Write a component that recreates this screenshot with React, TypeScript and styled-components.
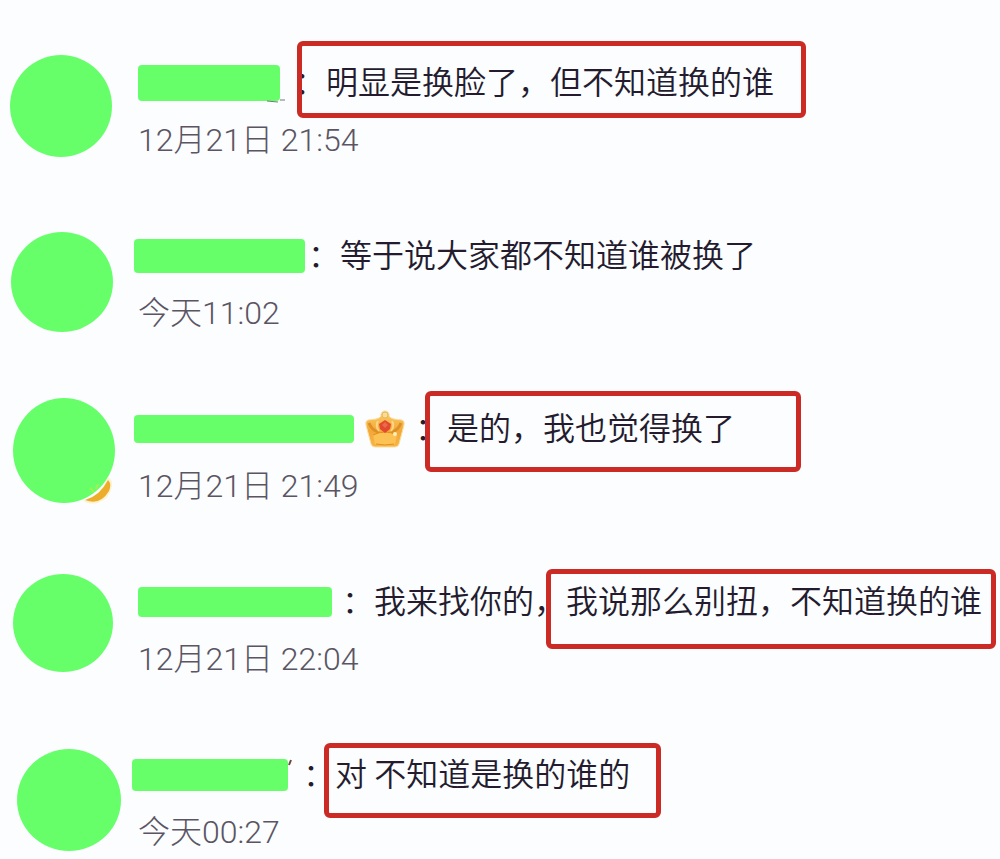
import React from "react";
import styled, { createGlobalStyle } from "styled-components";

const GlobalStyle = createGlobalStyle`
  *, *::before, *::after { box-sizing: border-box; }
  body {
    margin: 0;
    background: #fbfdff;
    color: #241c2e;
    font-family: "Noto Sans CJK SC", "Liberation Sans", sans-serif;
    font-size: 32px;
    font-weight: 350;
  }
`;

const GREEN = "#66ff6a";

const Thread = styled.ul`
  list-style: none;
  margin: 0;
  padding: 40px 0 0;
  display: flex;
  flex-direction: column;
  gap: 53px;
  overflow: hidden;
`;

const Comment = styled.li`
  display: grid;
  grid-template-columns: 132px minmax(0, 1fr);
  height: 120px;
`;

const AvatarCell = styled.div<{ $left: number; $top: number }>`
  padding: ${(p) => p.$top}px 0 0 ${(p) => p.$left}px;
`;

const Avatar = styled.div<{ $width: number; $height: number }>`
  position: relative;
  width: ${(p) => p.$width}px;
  height: ${(p) => p.$height}px;
  border-radius: 50%;
  background: ${GREEN};
`;

const AvatarBadge = styled.svg`
  position: absolute;
  right: 0;
  bottom: -2px;
`;

const Body = styled.div`
  min-width: 0;
`;

const Head = styled.div`
  display: flex;
  align-items: center;
  height: 80px;
  line-height: 80px;
  white-space: nowrap;
`;

const Author = styled.div<{ $width: number; $inset: number }>`
  position: relative;
  flex: none;
  display: flex;
  align-items: center;
  gap: 11px;
  width: ${(p) => p.$width}px;
  height: 40px;
  margin-top: 5px;
  padding-left: ${(p) => p.$inset}px;
`;

const NameBar = styled.span<{ $width: number; $height: number }>`
  width: ${(p) => p.$width}px;
  height: ${(p) => p.$height}px;
  border-radius: 4px;
  background: ${GREEN};
`;

const Remnant = styled.svg`
  position: absolute;
  right: 8px;
  top: 0;
`;

const Message = styled.p`
  margin: 0;
`;

const Highlight = styled.mark<{ $pad: [number, number, number, number] }>`
  padding: ${(p) => p.$pad.map((v) => `${v}px`).join(" ")};
  margin-left: ${(p) => -(p.$pad[3] + 5)}px;
  border: 5px solid #cb2b24;
  border-radius: 6px;
  background: transparent;
  color: inherit;
`;

const Time = styled.time`
  display: block;
  padding-left: 6px;
  line-height: 40px;
  color: #5b5563;
  font-family: Roboto, "Noto Sans CJK SC", sans-serif;
  font-weight: 300;
`;

function Crown() {
  return (
    <svg width="40" height="38" viewBox="0 0 40 38" aria-label="crown" role="img">
      <defs>
        <linearGradient id="gold" x1="0" y1="0" x2="0" y2="1">
          <stop offset="0" stopColor="#f9cf6a" />
          <stop offset="0.55" stopColor="#f3a838" />
          <stop offset="1" stopColor="#f6b548" />
        </linearGradient>
      </defs>
      <path
        d="M20 1a4 4 0 0 1 4 5q1 2 5 3l8 1q3 1 2 5l-5 19q-1 3-4 3H10q-3 0-4-3L1 15q-1-4 2-5l8-1q4-1 5-3a4 4 0 0 1 4-5z"
        fill="url(#gold)"
        stroke="#fbdf9e"
        strokeWidth="1"
      />
      <path d="M4 13q3 8 10 9M36 13q-3 8-10 9" fill="none" stroke="#de9026" strokeWidth="3" />
      <path d="M13 11q-3 5 1 10M27 11q3 5-1 10" fill="none" stroke="#fbd684" strokeWidth="2" />
      <path d="M8 25q12-6 24 0l-2 9q-10 3-20 0z" fill="#fcc254" />
      <path d="M8 25q12-6 24 0M11 34q9 2 18 0" fill="none" stroke="#e28f20" strokeWidth="1" />
      <circle cx="20" cy="5" r="3" fill="#fbdc9a" stroke="#eab45a" />
      <path d="M20 10l6 4-1 5-5 4-5-4-1-5z" fill="#e2492f" />
      <path d="M20 12l3 3-3 3-3-3z" fill="#ea6a4c" />
      <circle cx="30" cy="24" r="2" fill="#fff0bb" />
    </svg>
  );
}

type CommentData = {
  avatar: { left: number; top: number; width: number; height: number; badge?: boolean };
  author: { width: number; inset: number };
  bar: { width: number; height: number };
  remnant?: "underscore" | "tick";
  crown?: boolean;
  plain?: string;
  marked?: string;
  pad?: [number, number, number, number];
  time: string;
};

const comments: CommentData[] = [
  {
    avatar: { left: 10, top: 15, width: 102, height: 102 },
    author: { width: 162, inset: 6 },
    bar: { width: 142, height: 36 },
    remnant: "underscore",
    marked: "明显是换脸了，但不知道换的谁",
    pad: [11, 27, 10, 24],
    time: "12月21日 21:54",
  },
  {
    avatar: { left: 11, top: 19, width: 102, height: 100 },
    author: { width: 176, inset: 2 },
    bar: { width: 171, height: 34 },
    plain: "等于说大家都不知道谁被换了",
    time: "今天11:02",
  },
  {
    avatar: { left: 13, top: 12, width: 102, height: 105, badge: true },
    author: { width: 283, inset: 2 },
    bar: { width: 220, height: 28 },
    crown: true,
    marked: "是的，我也觉得换了",
    pad: [7, 61, 18, 17],
    time: "12月21日 21:49",
  },
  {
    avatar: { left: 13, top: 15, width: 100, height: 98 },
    author: { width: 210, inset: 6 },
    bar: { width: 194, height: 30 },
    plain: "我来找你的，",
    marked: "我说那么别扭，不知道换的谁",
    pad: [2, 9, 22, 15],
    time: "12月21日 22:04",
  },
  {
    avatar: { left: 17, top: 17, width: 104, height: 102 },
    author: { width: 171, inset: 0 },
    bar: { width: 156, height: 32 },
    remnant: "tick",
    marked: "对 不知道是换的谁的",
    pad: [1, 26, 18, 6],
    time: "今天00:27",
  },
];

export default function App() {
  return (
    <>
      <GlobalStyle />
      <Thread>
        {comments.map((c) => (
          <Comment key={c.time}>
            <AvatarCell $left={c.avatar.left} $top={c.avatar.top}>
              <Avatar $width={c.avatar.width} $height={c.avatar.height}>
                {c.avatar.badge && (
                  <AvatarBadge width="34" height="34" viewBox="0 0 34 34" aria-hidden="true">
                    <path d="M2 30Q20 24 27 6q5 3 4 9-2 13-14 17-9 2-15-2z" fill="#fdf3d2" />
                    <path d="M4 29Q19 25 27 9q4 4 1 11-9 15-24 9z" fill="#ecae2a" />
                    <path d="M9 17l4 4M17 13l-2 5" stroke="#a5f04e" strokeWidth="2" />
                  </AvatarBadge>
                )}
              </Avatar>
            </AvatarCell>
            <Body>
              <Head>
                <Author $width={c.author.width} $inset={c.author.inset}>
                  <NameBar $width={c.bar.width} $height={c.bar.height} />
                  {c.crown && <Crown />}
                  {c.remnant === "underscore" && (
                    <Remnant width="22" height="40" viewBox="0 0 22 40" aria-hidden="true">
                      <path d="M3 38l11 1M16 37h5" stroke="#6f7a74" strokeWidth="1" />
                    </Remnant>
                  )}
                  {c.remnant === "tick" && (
                    <Remnant width="8" height="40" viewBox="0 0 8 40" aria-hidden="true">
                      <path d="M4 5l-2 5" stroke="#6b4a3c" strokeWidth="2" />
                    </Remnant>
                  )}
                </Author>
                <Message>
                  ：{c.plain}
                  {c.marked && <Highlight $pad={c.pad!}>{c.marked}</Highlight>}
                </Message>
              </Head>
              <Time>{c.time}</Time>
            </Body>
          </Comment>
        ))}
      </Thread>
    </>
  );
}
